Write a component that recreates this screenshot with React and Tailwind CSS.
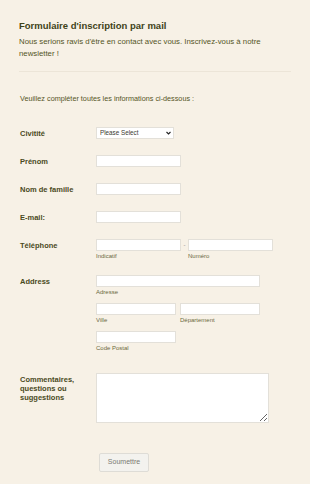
import React from 'react';

const field = 'h-[12px] bg-white border border-[#e3e0d9] outline-none';

function Row({ label, children, className = '' }) {
  return (
    <div className={`flex items-start ${className}`}>
      <div className="w-[76px] shrink-0 text-[7.5px] leading-[9px] font-bold text-[#4a4a1c] pt-[1.5px]">{label}</div>
      <div className="flex-1">{children}</div>
    </div>
  );
}

function Sub({ children }) {
  return <div className="text-[6px] leading-[8px] mt-[1px] text-[#6b6a3e]">{children}</div>;
}

export default function App() {
  return (
    <div className="min-h-screen bg-[#f7f1e6] font-['Liberation_Sans',Arial,sans-serif] text-[#4a4a1c]">
      {/* Header */}
      <div className="pl-[19px] pr-[19px] pt-[19px]">
        <h1 className="text-[9.5px] leading-[13px] font-bold text-[#3f4319]">Formulaire d'inscription par mail</h1>
        <p className="mt-[4px] text-[7.8px] leading-[11.5px] text-[#55551f]">
          Nous serions ravis d'être en contact avec vous. Inscrivez-vous à notre newsletter !
        </p>
        <div className="mt-[12px] border-t border-[#ece5d8]" />
      </div>

      <div className="pl-[20px] pr-[19px]">
        <p className="mt-[21px] text-[7.25px] leading-[11px] text-[#55551f]">Veuillez compléter toutes les informations ci-dessous :</p>

        <Row label="Civitité" className="mt-[23px]">
          <div className="relative w-[78px]">
            <select className={`${field} w-full appearance-none text-[6.3px] leading-[10px] text-[#3a3a30] pl-[3px] block`}>
              <option>Please Select</option>
            </select>
            <svg className="absolute right-[3px] top-[4px] w-[5px] h-[4px] pointer-events-none" viewBox="0 0 10 8" fill="none" stroke="#222" strokeWidth="2.2">
              <path d="M1 2l4 4 4-4" />
            </svg>
          </div>
        </Row>

        <Row label="Prénom" className="mt-[16px]">
          <input className={`${field} w-[85px] block`} />
        </Row>

        <Row label="Nom de famille" className="mt-[16px]">
          <input className={`${field} w-[85px] block`} />
        </Row>

        <Row label="E-mail:" className="mt-[16px]">
          <input className={`${field} w-[85px] block`} />
        </Row>

        <Row label="Téléphone" className="mt-[16px]">
          <div className="flex items-start">
            <div>
              <input className={`${field} w-[85px] block`} />
              <Sub>Indicatif</Sub>
            </div>
            <span className="w-[7px] text-center text-[6px] leading-[12px] text-[#888]">-</span>
            <div>
              <input className={`${field} w-[85px] block`} />
              <Sub>Numéro</Sub>
            </div>
          </div>
        </Row>

        <Row label="Address" className="mt-[15px]">
          <input className={`${field} w-[164px] block`} />
          <Sub>Adresse</Sub>
          <div className="flex gap-[4px] mt-[7px]">
            <div>
              <input className={`${field} w-[80px] block`} />
              <Sub>Ville</Sub>
            </div>
            <div>
              <input className={`${field} w-[80px] block`} />
              <Sub>Département</Sub>
            </div>
          </div>
          <div className="mt-[7px]">
            <input className={`${field} w-[80px] block`} />
            <Sub>Code Postal</Sub>
          </div>
        </Row>

        <Row label={<>Commentaires,<br />questions ou<br />suggestions</>} className="mt-[21px]">
          <textarea className="w-[173px] h-[50px] block bg-white border border-[#e3e0d9] outline-none" />
        </Row>

        <div className="pl-[79px] mt-[24px] pb-[17px]">
          <button className="w-[50px] h-[19px] bg-[#f3f2ee] border border-[#dedcd6] rounded-[2px] text-[7px] text-[#7a7a72]">
            Soumettre
          </button>
        </div>
      </div>
    </div>
  );
}
